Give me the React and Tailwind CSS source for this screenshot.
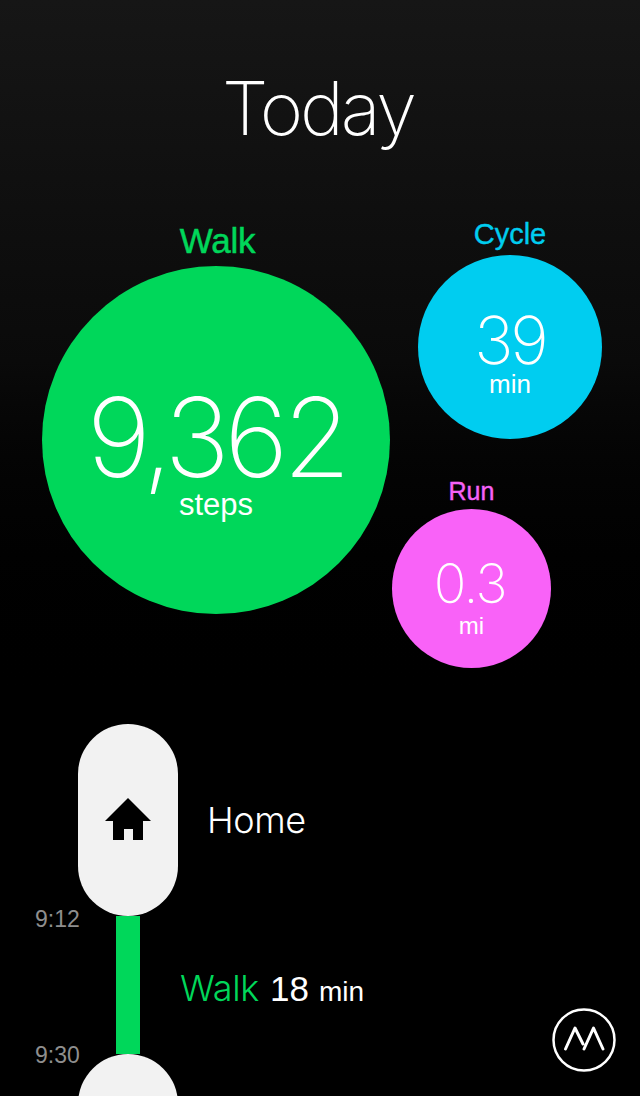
const LIGHT = "font-['Inter','Liberation_Sans',sans-serif]";
const PLAIN = "font-['Liberation_Sans',sans-serif]";

const HomeIcon = () => (
  <svg width="46" height="42" viewBox="0 0 46 42" fill="#000" className="mb-[2px]">
    <path d="M23 0 L46 23 L38 23 L38 42 L28 42 L28 31 L19 31 L19 42 L8 42 L8 23 L0 23 Z" />
  </svg>
);

const Logo = () => (
  <svg width="64" height="64" viewBox="0 0 64 64" fill="none" stroke="#fff" strokeWidth="2.5">
    <circle cx="32" cy="32" r="30.5" />
    <path d="M13.5 41 L23 20 L31 36 M32 41 L41.5 20 L51 41" strokeWidth="3" strokeLinecap="round" strokeLinejoin="round" />
  </svg>
);

const Stat = ({ label, labelClass, circleClass, value, valueClass, unit, unitClass }) => (
  <div className="flex flex-col items-center">
    <div className={`${PLAIN} ${labelClass}`}>{label}</div>
    <div className={`${circleClass} rounded-full flex flex-col items-center justify-center text-white`}>
      <div className={`${LIGHT} font-[250] ${valueClass}`}>{value}</div>
      <div className={`${PLAIN} ${unitClass}`}>{unit}</div>
    </div>
  </div>
);

export default function App() {
  return (
    <div className={`relative h-[1096px] w-[640px] overflow-hidden bg-black text-white ${LIGHT}`}>
      {/* Top part with the gradient */}
      <div className="h-[724px] bg-gradient-to-b from-[#161616] via-[#0a0a0a] to-black">
        <h1 className="pt-[64px] pr-[4px] text-center text-[74px] leading-[88px] font-extralight tracking-[-3px]">Today</h1>

        <div className="mt-[61px] flex">
          {/* Walk */}
          <div className="ml-[42px] w-[348px] pt-[8px]">
            <Stat
              label="Walk"
              labelClass="pl-[3px] text-[35px] leading-[40px] tracking-[-0.2px] text-[#00d75a] [-webkit-text-stroke:0.5px_#00d75a]"
              circleClass="mt-[5px] w-[348px] h-[348px] bg-[#00d75a] pt-[32px]"
              value="9,362"
              valueClass="text-[110px] leading-[90px] tracking-[-5.5px]"
              unit="steps"
              unitClass="mt-[8px] text-[31px] leading-[30px]"
            />
          </div>

          {/* Cycle + Run */}
          <div className="flex flex-col items-start">
            <div className="ml-[28px] pt-[4px]">
              <Stat
                label="Cycle"
                labelClass="text-[29px] leading-[34px] text-[#00cdf0] [-webkit-text-stroke:0.4px_#00cdf0]"
                circleClass="mt-[4px] w-[184px] h-[184px] bg-[#00cdf0] pt-[18px]"
                value="39"
                valueClass="text-[66px] leading-[50px] tracking-[-3px]"
                unit="min"
                unitClass="mt-[6px] text-[26px] leading-[26px]"
              />
            </div>
            <div className="ml-[2px] mt-[37px]">
              <Stat
                label="Run"
                labelClass="text-[25px] leading-[30px] text-[#f562f7] [-webkit-text-stroke:0.4px_#f562f7]"
                circleClass="mt-[3px] w-[159px] h-[159px] bg-[#f962f8] pt-[24px]"
                value="0.3"
                valueClass="pr-[3px] text-[54px] leading-[40px] tracking-[-1.5px]"
                unit="mi"
                unitClass="mt-[10px] text-[24px] leading-[24px]"
              />
            </div>
          </div>
        </div>
      </div>

      {/* Timeline */}
      <div className="flex items-center">
        <div className="ml-[78px] flex h-[192px] w-[100px] items-center justify-center rounded-[50px] bg-[#f2f2f2]">
          <HomeIcon />
        </div>
        <div className="ml-[29px] text-[36px] leading-[44px] font-light tracking-[-0.4px]">Home</div>
      </div>

      <div className="flex h-[138px]">
        <div className={`${PLAIN} flex w-[116px] flex-col justify-between pl-[35px] -mt-[9px] mb-[-13px] text-[23px] leading-[24px] text-[#8e8e8e]`}>
          <div>9:12</div>
          <div>9:30</div>
        </div>
        <div className="w-[24px] bg-[#00d75a]" />
        <div className="ml-[40px] mt-[50px] flex items-baseline whitespace-nowrap leading-[44px]">
          <span className="text-[36px] font-light tracking-[-0.3px] text-[#00d75a]">Walk</span>
          <span className={`${PLAIN} ml-[11px] text-[35px]`}>18</span>
          <span className={`${PLAIN} ml-[10px] text-[28px]`}>min</span>
        </div>
      </div>

      <div className="ml-[78px] h-[192px] w-[100px] rounded-[50px] bg-[#f2f2f2]" />

      <div className="absolute left-[552px] top-[1008px]">
        <Logo />
      </div>
    </div>
  );
}
